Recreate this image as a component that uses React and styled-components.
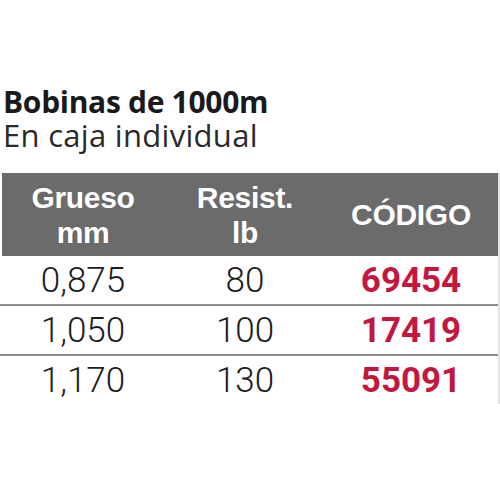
import React from "react";
import styled, { createGlobalStyle } from "styled-components";

const GlobalStyle = createGlobalStyle`
  html, body {
    margin: 0;
    padding: 0;
    background: #ffffff;
  }
`;

const rows = [
  { grueso: "0,875", resist: "80", code: "69454" },
  { grueso: "1,050", resist: "100", code: "17419" },
  { grueso: "1,170", resist: "130", code: "55091" },
];

const App = () => {
  return (
    <Page>
      <GlobalStyle />
      <Heading>
        <h2>Bobinas de 1000m</h2>
        <p>En caja individual</p>
      </Heading>
      <Table>
        <HeaderRow>
          <HeadCell>
            Grueso
            <br />
            mm
          </HeadCell>
          <HeadCell>
            Resist.
            <br />
            lb
          </HeadCell>
          <HeadCell>CÓDIGO</HeadCell>
        </HeaderRow>
        {rows.map((r, i) => (
          <Row key={r.code} $last={i === rows.length - 1}>
            <Cell>{r.grueso}</Cell>
            <Cell>{r.resist}</Cell>
            <Cell $code>{r.code}</Cell>
          </Row>
        ))}
      </Table>
    </Page>
  );
};

const Page = styled.div`
  width: 500px;
  height: 500px;
  padding-top: 85px;
  box-sizing: border-box;
  background: #fff;
`;

const Heading = styled.div`
  padding-left: 3px;
  font-family: "Open Sans", sans-serif;
  color: #1a1a1a;
  h2,
  p {
    margin: 0;
  }
  h2 {
    font-size: 30px;
    line-height: 33px;
    font-weight: 700;
    letter-spacing: -0.3px;
  }
  p {
    font-size: 31px;
    line-height: 34px;
    font-weight: 400;
    letter-spacing: 0.3px;
    color: #2a2a2a;
  }
`;

const Table = styled.div`
  margin-top: 21px;
  border-right: 2px solid #e2e2e2;
  width: 498px;
`;

const grid = `
  display: grid;
  grid-template-columns: 162px 162px 170px;
`;

const HeaderRow = styled.div`
  ${grid}
  margin-left: 2px;
  height: 83px;
  background: #6b6b6b;
  align-items: center;
`;

const HeadCell = styled.div`
  text-align: center;
  color: #ffffff;
  font-family: "Liberation Sans", Arial, sans-serif;
  font-weight: 700;
  font-size: 30px;
  line-height: 35px;
  letter-spacing: -0.3px;
`;

const Row = styled.div`
  ${grid}
  padding-left: 2px;
  height: 48px;
  align-items: center;
  border-bottom: ${(p) => (p.$last ? "none" : "2px solid #8c8c8c")};
`;

const Cell = styled.div`
  text-align: center;
  font-family: Roboto, "Liberation Sans", sans-serif;
  font-size: 35px;
  font-weight: ${(p) => (p.$code ? 700 : 300)};
  color: ${(p) => (p.$code ? "#c2173f" : "#1c1c1c")};
`;

export default App;
